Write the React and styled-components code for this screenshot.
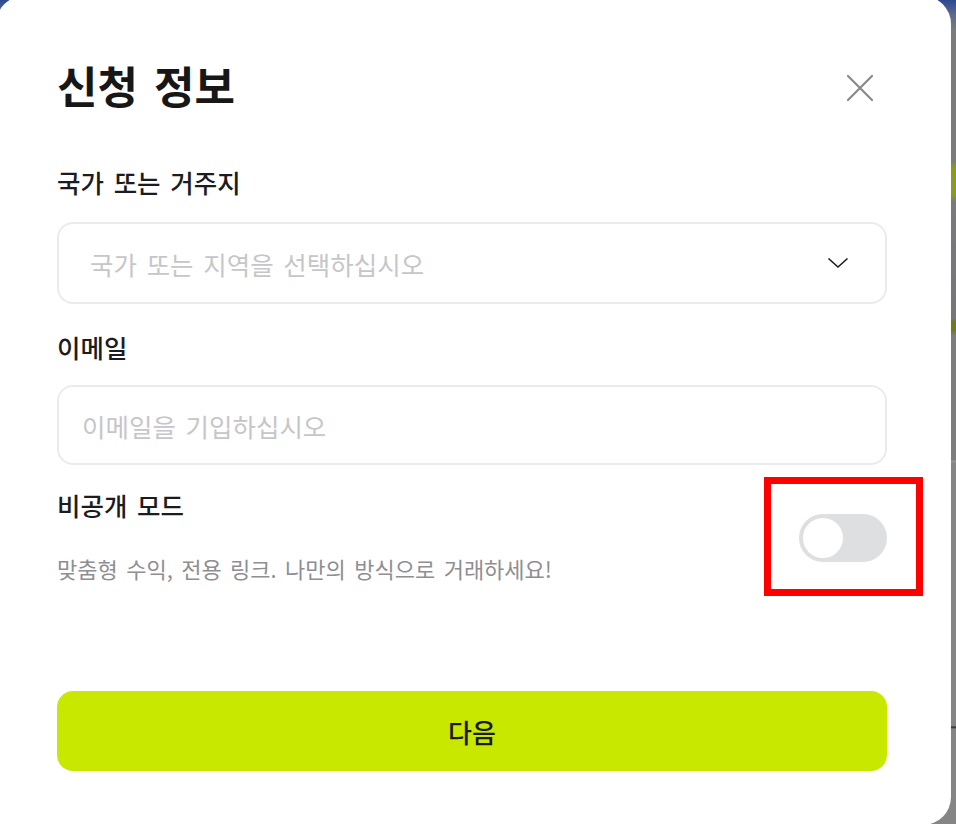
import styled, { createGlobalStyle } from 'styled-components'

const GlobalStyle = createGlobalStyle`
  html, body {
    margin: 0;
    padding: 0;
    height: 100%;
    overflow: hidden;
  }
  body {
    font-family: "Noto Sans CJK KR", "Noto Sans", sans-serif;
    background: linear-gradient(
      180deg,
      #2c4891 0px,
      #5a6a8c 14px,
      #7b7b7b 30px,
      #7b7b7b 160px,
      #8c9a1e 168px,
      #8c9a1e 194px,
      #7a7a7c 202px,
      #76767a 318px,
      #6f7a1a 322px,
      #6f7a1a 330px,
      #7d7d7d 336px,
      #7d7d7d 460px,
      #9a9a9a 461px,
      #858585 463px,
      #858585 726px,
      #222 727px,
      #858585 729px
    );
  }
`

const Modal = styled.div`
  box-sizing: border-box;
  width: 955px;
  height: 829px;
  margin: -4px 0 0 -4px;
  padding: 68px 64px 0 61px;
  background: #ffffff;
  border-radius: 28px 28px 28px 0;
  display: flex;
  flex-direction: column;
`

const Header = styled.div`
  display: flex;
  align-items: center;
  justify-content: space-between;
  height: 48px;
`

const Title = styled.h1`
  margin: 0;
  padding-bottom: 6px;
  font-size: 44px;
  font-weight: 700;
  color: #171717;
  word-spacing: 6px;
  line-height: 48px;
`

const CloseButton = styled.button`
  display: flex;
  align-items: center;
  justify-content: center;
  width: 30px;
  height: 30px;
  margin-right: 12px;
  padding: 0;
  border: none;
  background: none;
  cursor: pointer;
`

const Label = styled.div`
  margin-top: ${p => p.$top}px;
  font-size: 25.5px;
  font-weight: 500;
  line-height: 32px;
  color: #1c1c1e;
  word-spacing: 4px;
`

const Field = styled.div`
  box-sizing: border-box;
  display: flex;
  align-items: center;
  justify-content: space-between;
  margin-top: ${p => p.$top}px;
  height: ${p => p.$height}px;
  padding: 0 36px 0 ${p => p.$padLeft}px;
  border: 2px solid #ebebed;
  border-radius: 16px;
`

const Placeholder = styled.span`
  font-size: 25.5px;
  font-weight: 400;
  color: #c6c6ca;
  word-spacing: 4px;
`

const PrivateRow = styled.div`
  display: flex;
  align-items: center;
  justify-content: space-between;
  margin-top: 24px;
`

const PrivateText = styled.div`
  display: flex;
  flex-direction: column;
`

const Description = styled.div`
  margin-top: 31px;
  font-size: 22px;
  line-height: 32px;
  color: #8e8e93;
  word-spacing: 3.5px;
`

const ToggleWrap = styled.div`
  position: relative;
  margin-top: 3px;
`

const Toggle = styled.div`
  box-sizing: border-box;
  width: 88px;
  height: 48px;
  padding: 4px;
  border-radius: 24px;
  background: #dedfe1;
  display: flex;
  align-items: center;
`

const Knob = styled.div`
  width: 40px;
  height: 40px;
  border-radius: 50%;
  background: #ffffff;
`

const Highlight = styled.div`
  position: absolute;
  box-sizing: border-box;
  left: -35px;
  top: -37px;
  width: 159px;
  height: 119px;
  border: 7px solid #ff0000;
  pointer-events: none;
`

const NextButton = styled.button`
  margin-top: 107px;
  height: 80px;
  border: none;
  border-radius: 16px;
  background: #c8e800;
  font-family: inherit;
  font-size: 26px;
  font-weight: 500;
  color: #1a1a1a;
  cursor: pointer;
`

function App() {
  return (
    <>
      <GlobalStyle />
      <Modal>
        <Header>
          <Title>신청 정보</Title>
          <CloseButton aria-label="닫기">
            <svg width="28" height="28" viewBox="0 0 28 28">
              <path d="M2 2 L26 26 M26 2 L2 26" stroke="#8a8a8c" strokeWidth="2.2" strokeLinecap="round" />
            </svg>
          </CloseButton>
        </Header>

        <Label $top={54}>국가 또는 거주지</Label>
        <Field $top={24} $height={82} $padLeft={31}>
          <Placeholder>국가 또는 지역을 선택하십시오</Placeholder>
          <svg width="22" height="12" viewBox="0 0 22 12">
            <polyline points="1.5,1.5 11,10 20.5,1.5" fill="none" stroke="#1c1c1e" strokeWidth="1.6" />
          </svg>
        </Field>

        <Label $top={27}>이메일</Label>
        <Field $top={22} $height={80} $padLeft={23}>
          <Placeholder>이메일을 기입하십시오</Placeholder>
        </Field>

        <PrivateRow>
          <PrivateText>
            <Label $top={0}>비공개 모드</Label>
            <Description>맞춤형 수익, 전용 링크. 나만의 방식으로 거래하세요!</Description>
          </PrivateText>
          <ToggleWrap>
            <Toggle>
              <Knob />
            </Toggle>
            <Highlight />
          </ToggleWrap>
        </PrivateRow>

        <NextButton>다음</NextButton>
      </Modal>
    </>
  )
}

export default App
